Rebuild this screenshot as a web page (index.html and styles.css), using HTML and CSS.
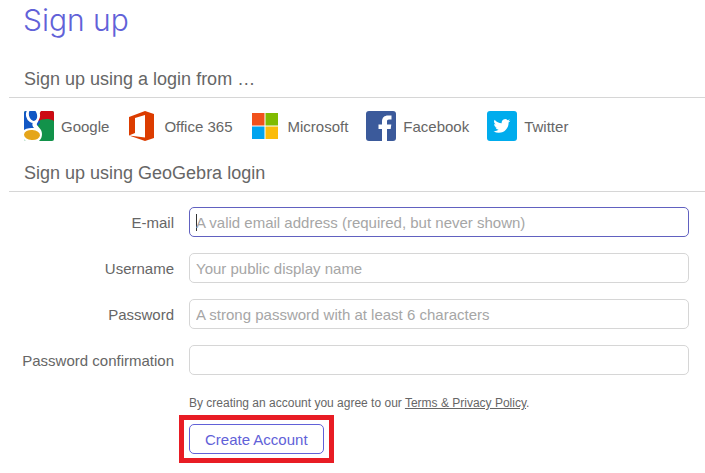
FILE: index.html
```
<!DOCTYPE html>
<html lang="en">
<head>
    <meta charset="UTF-8">
    <meta name="viewport" content="width=device-width, initial-scale=1.0">
    <title>Sign up</title>
    <link rel="stylesheet" href="styles.css">
</head>
<body>
    <main class="signup">
        <h1>Sign up</h1>

        <h2>Sign up using a login from …</h2>
        <nav class="providers">
            <a href="#google">
                <svg width="30" height="30" viewBox="0 0 30 30">
                    <defs>
                        <clipPath id="tile"><rect width="30" height="30" rx="2"/></clipPath>
                    </defs>
                    <g clip-path="url(#tile)">
                        <rect width="30" height="30" fill="#12924a"/>
                        <path d="M0 0H16V12L9 20H0z" fill="#1257c4"/>
                        <path d="M14 0H30V10C25 7 19 8 14 10z" fill="#cc0a12"/>
                        <ellipse cx="9" cy="4" rx="7" ry="8" transform="rotate(-14 9 4)" fill="#fff"/>
                        <path d="M12 0H17L15 3H12z" fill="#fff"/>
                        <path d="M14 7C16 10 12 12 13 14C14 16 18 18 18 23C18 26 17 28 15 30H0V19C3 17 7 17 10 17C8 15 8 13 9 11z" fill="#fff"/>
                        <ellipse cx="9" cy="4" rx="4" ry="6" transform="rotate(-14 9 4)" fill="#1257c4"/>
                        <ellipse cx="8" cy="24" rx="8" ry="5" transform="rotate(4 8 24)" fill="#e5a51b"/>
                    </g>
                </svg>
                Google
            </a>
            <a href="#office">
                <svg width="30" height="30" viewBox="0 0 30 30">
                    <path fill="#dc3c00" fill-rule="evenodd" d="M2 6L18 0L27 3V27L18 30L2 24.500L18 26.500V4L8 7V22L2 24.500z"/>
                </svg>
                Office 365
            </a>
            <a href="#microsoft">
                <svg width="30" height="30" viewBox="0 0 30 30">
                    <path fill="#f1511b" d="M2 2h12.500v12.500H2z"/>
                    <path fill="#80bb01" d="M15.500 2H28v12.500H15.500z"/>
                    <path fill="#00a4ef" d="M2 15.500h12.500V28H2z"/>
                    <path fill="#fbbc09" d="M15.500 15.500H28V28H15.500z"/>
                </svg>
                Microsoft
            </a>
            <a href="#facebook">
                <svg width="30" height="30" viewBox="0 0 30 30">
                    <rect width="30" height="30" rx="3" fill="#3b5a9b"/>
                    <path fill="#fff" d="M16 30V18H12.500V13.500H16V10.500C16 6.500 18.500 4.500 22 4.500H25.500V8.500H23C21.400 8.500 21 9.300 21 10.600V13.500H25.300L24.700 18H21V30z"/>
                </svg>
                Facebook
            </a>
            <a href="#twitter">
                <svg width="30" height="30" viewBox="0 0 30 30">
                    <rect width="30" height="30" rx="3" fill="#00aced"/>
                    <path fill="#fff" transform="translate(6.500 6.500) scale(.7)" d="M23.950 4.570a10 10 0 0 1-2.820.770 4.960 4.960 0 0 0 2.160-2.720 9.900 9.900 0 0 1-3.120 1.190 4.920 4.920 0 0 0-8.380 4.480C7.690 8.090 4.070 6.130 1.640 3.160a4.920 4.920 0 0 0 1.520 6.570 4.900 4.900 0 0 1-2.230-.610v.060a4.920 4.920 0 0 0 3.950 4.830 5 5 0 0 1-2.210.080 4.940 4.940 0 0 0 4.600 3.420A9.870 9.870 0 0 1 0 19.540a14 14 0 0 0 7.550 2.210c9.050 0 14-7.500 14-13.980 0-.210 0-.420-.020-.630a9.940 9.940 0 0 0 2.460-2.550z"/>
                </svg>
                Twitter
            </a>
        </nav>

        <h2>Sign up using GeoGebra login</h2>
        <form class="signup-form">
            <label for="email">E-mail</label>
            <input type="email" id="email" class="active" placeholder="A valid email address (required, but never shown)">
            <label for="username">Username</label>
            <input type="text" id="username" placeholder="Your public display name">
            <label for="password">Password</label>
            <input type="password" id="password" placeholder="A strong password with at least 6 characters">
            <label for="confirmation">Password confirmation</label>
            <input type="password" id="confirmation">

            <div class="submit">
                <p>By creating an account you agree to our <a href="#terms">Terms &amp; Privacy Policy</a>.</p>
                <div class="highlight">
                    <button type="button">Create Account</button>
                </div>
            </div>
        </form>
    </main>
</body>
</html>
```
FILE: styles.css
```
body {
    font-family: "Liberation Sans", Arial, sans-serif;
    font-size: 15px;
    color: #666;
    background-color: #fff;
    margin: 0;
}

.signup {
    padding-left: 9px;
}

h1 {
    font-family: Inter, sans-serif;
    font-size: 30px;
    font-weight: 300;
    line-height: 40px;
    color: #6161d8;
    margin: 0;
    padding-left: 14px;
}

h2 {
    font-size: 18px;
    font-weight: normal;
    line-height: 24px;
    margin: 0;
    padding: 0 0 6px 15px;
    border-bottom: 1px solid #d6d6d6;
}

h1 + h2 {
    margin-top: 27px;
}

.providers {
    display: flex;
    flex-wrap: wrap;
    gap: 18px;
    padding: 13px 15px 20px;
}

.providers a {
    display: flex;
    align-items: center;
    gap: 7px;
    color: #666;
    text-decoration: none;
}

.signup-form {
    display: grid;
    grid-template-columns: 165px 1fr;
    align-items: center;
    gap: 16px 15px;
    padding: 15px 16px 0 0;
}

label {
    text-align: right;
}

input {
    box-sizing: border-box;
    width: 100%;
    height: 30px;
    padding: 0 6px;
    border: 1px solid #d6d6d6;
    border-radius: 5px;
    background-color: #fff;
    font-family: inherit;
    font-size: 15px;
    color: #666;
    outline: none;
}

input::placeholder {
    color: #a6a6a6;
    opacity: 1;
}

/* text cursor in the active field */
input.active {
    border-color: #6161c0;
    background: linear-gradient(#333, #333) 6px center / 1px 17px no-repeat #fff;
}

.submit {
    grid-column: 2;
}

.submit p {
    font-size: 12px;
    line-height: 16px;
    margin: 4px 0;
}

.submit p a {
    color: #666;
}

.highlight {
    display: inline-block;
    padding: 4px 5px;
    margin-left: -10px;
    border: 5px solid #e81c24;
}

button {
    display: block;
    height: 30px;
    padding: 0 15px;
    border: 1px solid #6161d8;
    border-radius: 5px;
    background-color: #fff;
    font-family: inherit;
    font-size: 15px;
    color: #6161d8;
    cursor: pointer;
}
```
